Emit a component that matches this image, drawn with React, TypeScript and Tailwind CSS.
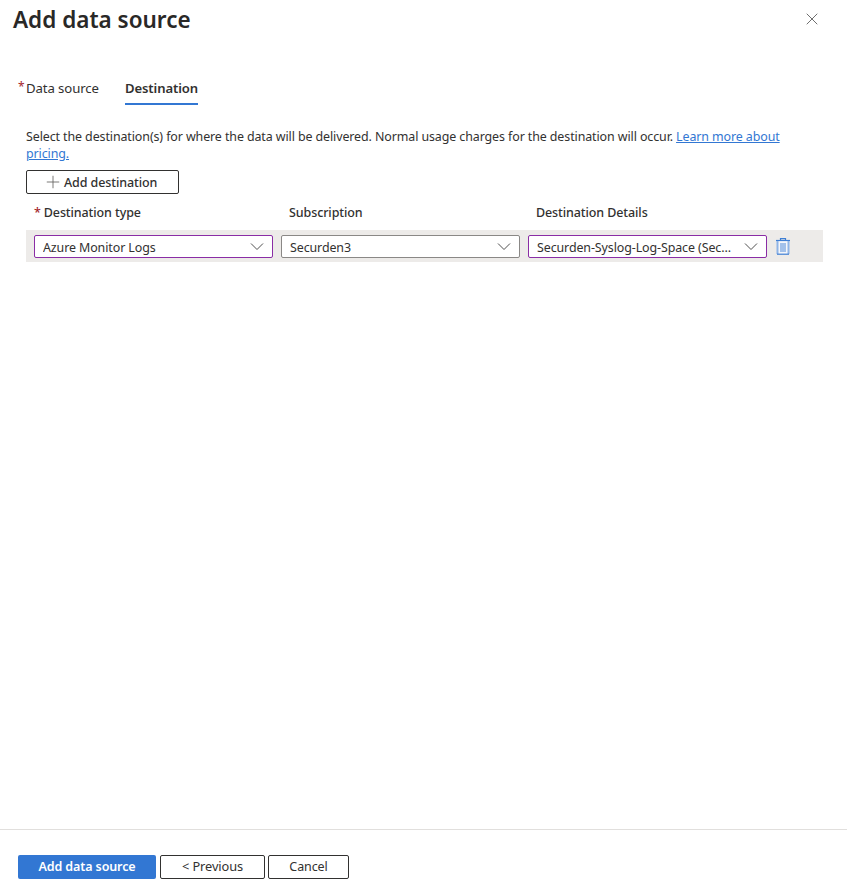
import { Plus, X } from "lucide-react";

const font = "font-['Noto_Sans',sans-serif]";

function Chevron() {
  return (
    <svg width="16" height="16" viewBox="0 0 16 16" fill="none" className="shrink-0">
      <path d="M2 5.5l6 6 6-6" stroke="#505050" strokeWidth="1" />
    </svg>
  );
}

function Trash() {
  return (
    <svg width="14" height="17" viewBox="0 0 14 17" fill="none" className="ml-px">
      <path d="M4.5 2V0.6h5V2" stroke="#3f7fd4" strokeWidth="1.2" />
      <rect x="1" y="2" width="12" height="14.5" fill="#f4f6fa" />
      <path d="M0 2.5h14" stroke="#3f7fd4" strokeWidth="1.2" />
      <path d="M1.5 3v13M12.5 3v13" stroke="#8fb4e6" strokeWidth="2" />
      <path d="M1 16.2h12" stroke="#3f7fd4" strokeWidth="1.2" />
      <rect x="4" y="5" width="6" height="9" fill="#a3c1ea" />
    </svg>
  );
}

function Select({ value, purple }: { value: string; purple?: boolean }) {
  return (
    <div
      className={`flex h-[23px] w-[239px] items-center justify-between rounded-[2px] border bg-white pl-2 pr-[7px] ${
        purple ? "border-[#8a2da5]" : "border-[#8a8886]"
      }`}
    >
      <span className="mr-[8px] truncate pt-[2px]">{value}</span>
      <Chevron />
    </div>
  );
}

export default function App() {
  return (
    <div className={`${font} flex h-[896px] w-[847px] flex-col bg-white text-[12px] leading-[17px] tracking-[-0.1px] text-[#323130]`}>
      <div className="flex h-[38px] items-center justify-between pl-[13px] pr-[25px]">
        <h1 className="text-[22.5px] font-semibold tracking-normal text-[#292827]">Add data source</h1>
        <X size={20} strokeWidth={1} className="text-[#505050]" />
      </div>

      <div className="flex-1 pl-[26px] pr-6">
        <div className="mt-[42px] flex gap-[26px]">
          <div className="relative h-[25px]">
            <span className="absolute left-[-8px] top-[-2px] text-[#a4262c]">*</span>
            <span className="text-[13.2px]">Data source</span>
          </div>
          <div className="h-[25px] border-b-2 border-[#3277d3]">
            <span className="text-[13.1px] font-semibold">Destination</span>
          </div>
        </div>

        <p className="mt-[23px] text-[12.45px]">
          Select the destination(s) for where the data will be delivered. Normal usage charges for the destination will occur.{" "}
          <a className="text-[#3277d3] underline">Learn more about pricing.</a>
        </p>

        <button className="mt-[8px] flex h-[24px] w-[153px] items-center gap-px rounded-[2px] border border-[#323130] pl-[16px] text-[12.5px] font-medium">
          <Plus size={20} strokeWidth={1} className="text-[#605e5c]" />
          Add destination
        </button>

        <div className="mt-[9px] flex h-[18px] items-center pl-2 text-[12.5px] font-medium">
          <div className="w-[255px]">
            <span className="mr-[3px] text-[#a4262c]">*</span>Destination type
          </div>
          <div className="w-[247px]">Subscription</div>
          <div>Destination Details</div>
        </div>

        <div className="mt-[9px] flex h-[32px] w-[797px] items-center gap-2 bg-[#edebe9] pl-2 text-[12.45px]">
          <Select value="Azure Monitor Logs" purple />
          <Select value="Securden3" />
          <Select value="Securden-Syslog-Log-Space (Securden3)" purple />
          <Trash />
        </div>
      </div>

      <div className="flex h-[67px] border-t border-[#e1dfdd] pl-[18px] pt-[25px]">
        <button className="h-[24px] w-[138px] rounded-[2px] bg-[#3277d3] pb-px text-[12.5px] font-semibold text-white">Add data source</button>
        <button className="ml-1 h-[24px] w-[105px] rounded-[2px] border border-[#323130] pb-px text-[12.8px]">&lt; Previous</button>
        <button className="ml-[3px] h-[24px] w-[81px] rounded-[2px] border border-[#323130] pb-px text-[12.5px]">Cancel</button>
      </div>
    </div>
  );
}
